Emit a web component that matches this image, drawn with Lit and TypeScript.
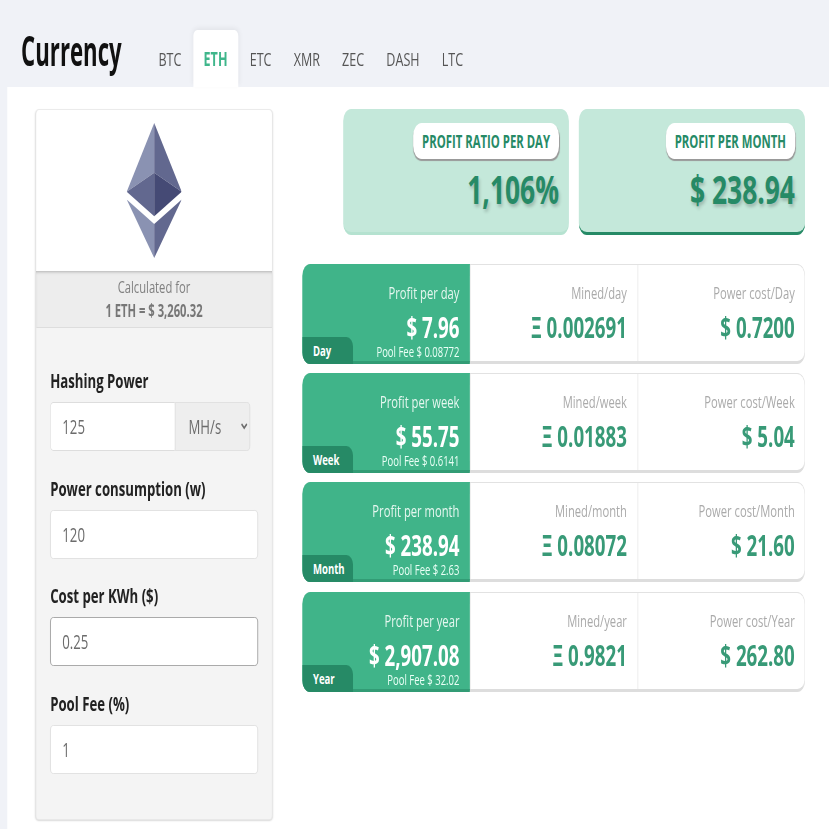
import { LitElement, css, html, unsafeCSS } from "lit";
import { customElement } from "lit/decorators.js";

const S = 0.66;
const px = (n: number) => unsafeCSS(`${n / S}px`);

const rows = [
  { tag: "Day", title: "Profit per day", value: "$ 7.96", fee: "Pool Fee $ 0.08772", minedT: "Mined/day", mined: "Ξ 0.002691", costT: "Power cost/Day", cost: "$ 0.7200" },
  { tag: "Week", title: "Profit per week", value: "$ 55.75", fee: "Pool Fee $ 0.6141", minedT: "Mined/week", mined: "Ξ 0.01883", costT: "Power cost/Week", cost: "$ 5.04" },
  { tag: "Month", title: "Profit per month", value: "$ 238.94", fee: "Pool Fee $ 2.63", minedT: "Mined/month", mined: "Ξ 0.08072", costT: "Power cost/Month", cost: "$ 21.60" },
  { tag: "Year", title: "Profit per year", value: "$ 2,907.08", fee: "Pool Fee $ 32.02", minedT: "Mined/year", mined: "Ξ 0.9821", costT: "Power cost/Year", cost: "$ 262.80" },
];

@customElement("app-root")
export class AppRoot extends LitElement {
  static styles = css`
    :host {
      display: block;
      width: 829px;
      height: 829px;
      overflow: hidden;
      background: #f0f2f7;
      font-family: "Open Sans", "Noto Sans", sans-serif;
    }
    * { box-sizing: border-box; }
    .page { width: ${px(829)}; height: 829px; transform: scaleX(${unsafeCSS(String(S))}); transform-origin: 0 0; }
    .header { height: 87px; display: flex; align-items: flex-end; padding-left: ${px(21)}; }
    .title { font-size: 42px; font-weight: 700; color: #111; line-height: 57px; height: 66px; width: ${px(127)}; white-space: nowrap; transform: scaleX(.8); transform-origin: 0 0; }
    .tabs { display: flex; gap: ${px(1.2)}; }
    .tab { height: 57px; padding: 0 ${px(10.5)}; display: flex; align-items: center; font-size: 19px; color: #555; border-radius: 6px 6px 0 0; }
    .tab.active { background: #fff; color: #3fb68b; font-weight: 700; box-shadow: 0 -2px 6px rgba(0,0,0,.06); }
    .panel { margin-left: ${px(7)}; background: #fff; height: 742px; padding: 22px 0 0 ${px(28.5)}; display: flex; gap: ${px(29.5)}; }
    .side { width: ${px(237)}; height: 711px; background: #f4f4f4; border: 1px solid #e8e8e8; border-radius: 5px; box-shadow: 0 1px 2px rgba(0,0,0,.15); flex: none; }
    .logo { height: 161px; background: #fff; display: flex; align-items: center; justify-content: center; border-radius: 5px 5px 0 0; }
    .logo svg { width: ${px(55)}; height: 135px; display: block; }
    .calc { height: 57px; background: #ededed; border-bottom: 1px solid #ddd; box-shadow: inset 0 4px 4px -3px rgba(0,0,0,.25); text-align: center; font-size: 17px; color: #808080; line-height: 24px; padding-top: 4px; }
    .calc b { display: block; color: #777; font-weight: 700; }
    .form { padding: 40px ${px(14)} 0; display: flex; flex-direction: column; gap: 24.5px; }
    .field { display: flex; flex-direction: column; gap: 8px; }
    label { font-size: 20px; font-weight: 700; color: #222; line-height: 26px; white-space: nowrap; }
    input, select { font: inherit; font-size: 20px; color: #6c6c6c; height: 49px; border: 1px solid #ddd; background: #fff; border-radius: 5px; padding: 0 ${px(11.5)}; width: 100%; outline: none; }
    input.focus { border-color: #999; }
    .group { display: flex; width: ${px(200)}; }
    .group input { width: ${px(125)}; border-radius: 5px 0 0 5px; border-right: 0; flex: none; }
    .group select { width: ${px(75)}; flex: none; background: #eee; border-radius: 0 5px 5px 0; padding: 0 0 0 ${px(10)}; }
    .right { width: ${px(503)}; display: flex; flex-direction: column; gap: 29px; }
    .tops { display: flex; justify-content: flex-end; gap: ${px(10)}; }
    .top { width: ${px(226)}; height: 126px; background: #c4e8da; border-radius: 12px; border-bottom: 3px solid #b5e2d0; display: flex; flex-direction: column; align-items: flex-end; padding: 14px ${px(10)} 0; }
    .top.on { border-bottom-color: #268a66; }
    .pill { height: 36px; background: #fff; border-radius: 13px; box-shadow: 1px 2px 1px #999; padding: 0 ${px(9)}; display: flex; align-items: center; font-size: 17.2px; font-weight: 700; color: #268a66; white-space: nowrap; }
    .big { font-size: 40px; font-weight: 700; color: #268a66; line-height: 60px; text-shadow: 2px 3px 4px rgba(0,0,0,.2); white-space: nowrap; }
    .list { display: flex; flex-direction: column; gap: 9.2px; }
    .row { height: 100px; display: grid; grid-template-columns: ${px(168)} ${px(167.5)} 1fr; border: 1px solid #e2e2e2; border-bottom: 3px solid #ddd; border-left: 0; border-radius: 12px; background: #fff; }
    .cell { text-align: right; padding: 17px ${px(9.5)} 0 0; position: relative; white-space: nowrap; }
    .cell.mid { padding-right: ${px(10.5)}; }
    .cell + .cell { border-left: 1px solid #e4e4e4; }
    .cell.green { background: #40b489; margin: -1px 0 -3px; padding-top: 18px; padding-right: ${px(10.5)}; border-bottom: 3px solid #329c75; border-radius: 12px 0 0 12px; }
    .t { font-size: 17px; line-height: 22px; color: #aaa; }
    .v { font-size: 28.4px; font-weight: 700; line-height: 34px; margin-top: 6px; color: #389a77; }
    .f { font-size: 14.4px; line-height: 16px; color: #eafff6; }
    .green .v { color: #fff; }
    .green .t { color: #e6f7f0; }
    .tag { position: absolute; left: 0; bottom: -3px; width: ${px(51)}; height: 27px; background: #268a66; color: #fff; font-size: 14.5px; font-weight: 700; border-radius: 0 10px 0 12px; text-align: left; padding-left: ${px(11)}; line-height: 27px; }
  `;

  render() {
    return html`
      <div class="page">
        <div class="header">
          <div class="title">Currency</div>
          <div class="tabs">
            ${["BTC", "ETH", "ETC", "XMR", "ZEC", "DASH", "LTC"].map(
              (t) => html`<div class="tab ${t === "ETH" ? "active" : ""}">${t}</div>`
            )}
          </div>
        </div>
        <div class="panel">
          <div class="side">
            <div class="logo">
              <svg viewBox="0 0 256 417" preserveAspectRatio="none">
                <polygon points="128,0 0,212 128,154" fill="#8a92b2" />
                <polygon points="128,0 128,154 256,212" fill="#62688f" />
                <polygon points="0,212 128,154 128,288" fill="#62688f" />
                <polygon points="256,212 128,154 128,288" fill="#454a75" />
                <polygon points="0,236 128,417 128,312" fill="#8a92b2" />
                <polygon points="256,236 128,417 128,312" fill="#62688f" />
              </svg>
            </div>
            <div class="calc">Calculated for<b>1 ETH = $ 3,260.32</b></div>
            <div class="form">
              <div class="field">
                <label>Hashing Power</label>
                <div class="group">
                  <input value="125" />
                  <select><option>MH/s</option></select>
                </div>
              </div>
              <div class="field"><label>Power consumption (w)</label><input value="120" /></div>
              <div class="field"><label>Cost per KWh ($)</label><input class="focus" value="0.25" /></div>
              <div class="field"><label>Pool Fee (%)</label><input value="1" /></div>
            </div>
          </div>
          <div class="right">
            <div class="tops">
              <div class="top"><div class="pill">PROFIT RATIO PER DAY</div><div class="big">1,106%</div></div>
              <div class="top on"><div class="pill">PROFIT PER MONTH</div><div class="big">$ 238.94</div></div>
            </div>
            <div class="list">
              ${rows.map(
                (r) => html`<div class="row">
                  <div class="cell green">
                    <div class="t">${r.title}</div>
                    <div class="v">${r.value}</div>
                    <div class="f">${r.fee}</div>
                    <div class="tag">${r.tag}</div>
                  </div>
                  <div class="cell mid"><div class="t">${r.minedT}</div><div class="v">${r.mined}</div></div>
                  <div class="cell"><div class="t">${r.costT}</div><div class="v">${r.cost}</div></div>
                </div>`
              )}
            </div>
          </div>
        </div>
      </div>
    `;
  }
}
